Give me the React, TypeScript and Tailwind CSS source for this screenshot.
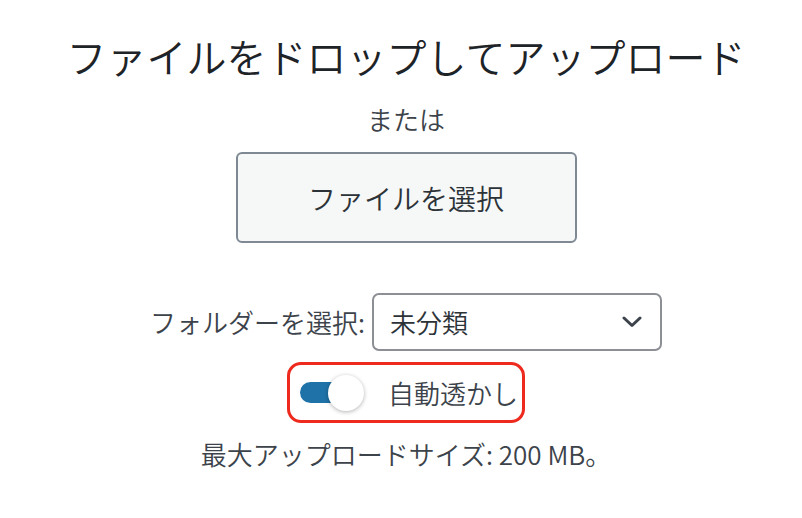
import React from "react";

export default function App() {
  return (
    <div
      className="w-[802px] h-[518px] bg-white flex flex-col items-center pl-[10px] pt-[36px] font-[350]"
      style={{ fontFamily: '"Noto Sans CJK JP", "Noto Sans", sans-serif' }}
    >
      <h2 className="text-[40px] leading-[40px] h-[40px] text-[#1d2327] font-[350] whitespace-nowrap">
        ファイルをドロップしてアップロード
      </h2>
      <p className="mt-[30px] text-[26px] leading-[26px] text-[#3c434a]">または</p>
      <button className="mt-[20px] w-[341px] h-[91px] rounded-[6px] border-2 border-[#7e8993] bg-[#f6f7f7] text-[28px] text-[#2c3338] flex items-center justify-center">
        ファイルを選択
      </button>
      <div className="mt-[50px] flex items-center gap-[7px]">
        <span className="text-[26px] leading-[26px] text-[#3c434a]">フォルダーを選択:</span>
        <div className="w-[290px] h-[58px] rounded-[7px] border-2 border-[#8c8f94] bg-white flex items-center justify-between pl-[16px] pr-[18px]">
          <span className="text-[26px] leading-[26px] text-[#2c3338]">未分類</span>
          <svg width="20" height="12" viewBox="0 0 20 12" fill="none">
            <path d="M2 2 L10 9.5 L18 2" stroke="#3c434a" strokeWidth="3" strokeLinecap="round" strokeLinejoin="round" />
          </svg>
        </div>
      </div>
      <div className="mt-[11px] w-[238px] h-[61px] rounded-[14px] border-[3px] border-[#ee2a1e] flex items-center pl-[10px]">
        <div className="relative w-[64px] h-[36px] flex items-center">
          <div className="w-[62px] h-[21px] rounded-full bg-[#1f72a8]" />
          <div className="absolute right-0 top-0 w-[36px] h-[36px] rounded-full bg-white shadow-[0_1px_4px_rgba(0,0,0,0.3)]" />
        </div>
        <span className="ml-[24px] text-[26px] leading-[26px] text-[#3c434a]">自動透かし</span>
      </div>
      <p className="mt-[18px] text-[26px] leading-[26px] text-[#3c434a] whitespace-nowrap">
        最大アップロードサイズ: 200 MB。
      </p>
    </div>
  );
}
